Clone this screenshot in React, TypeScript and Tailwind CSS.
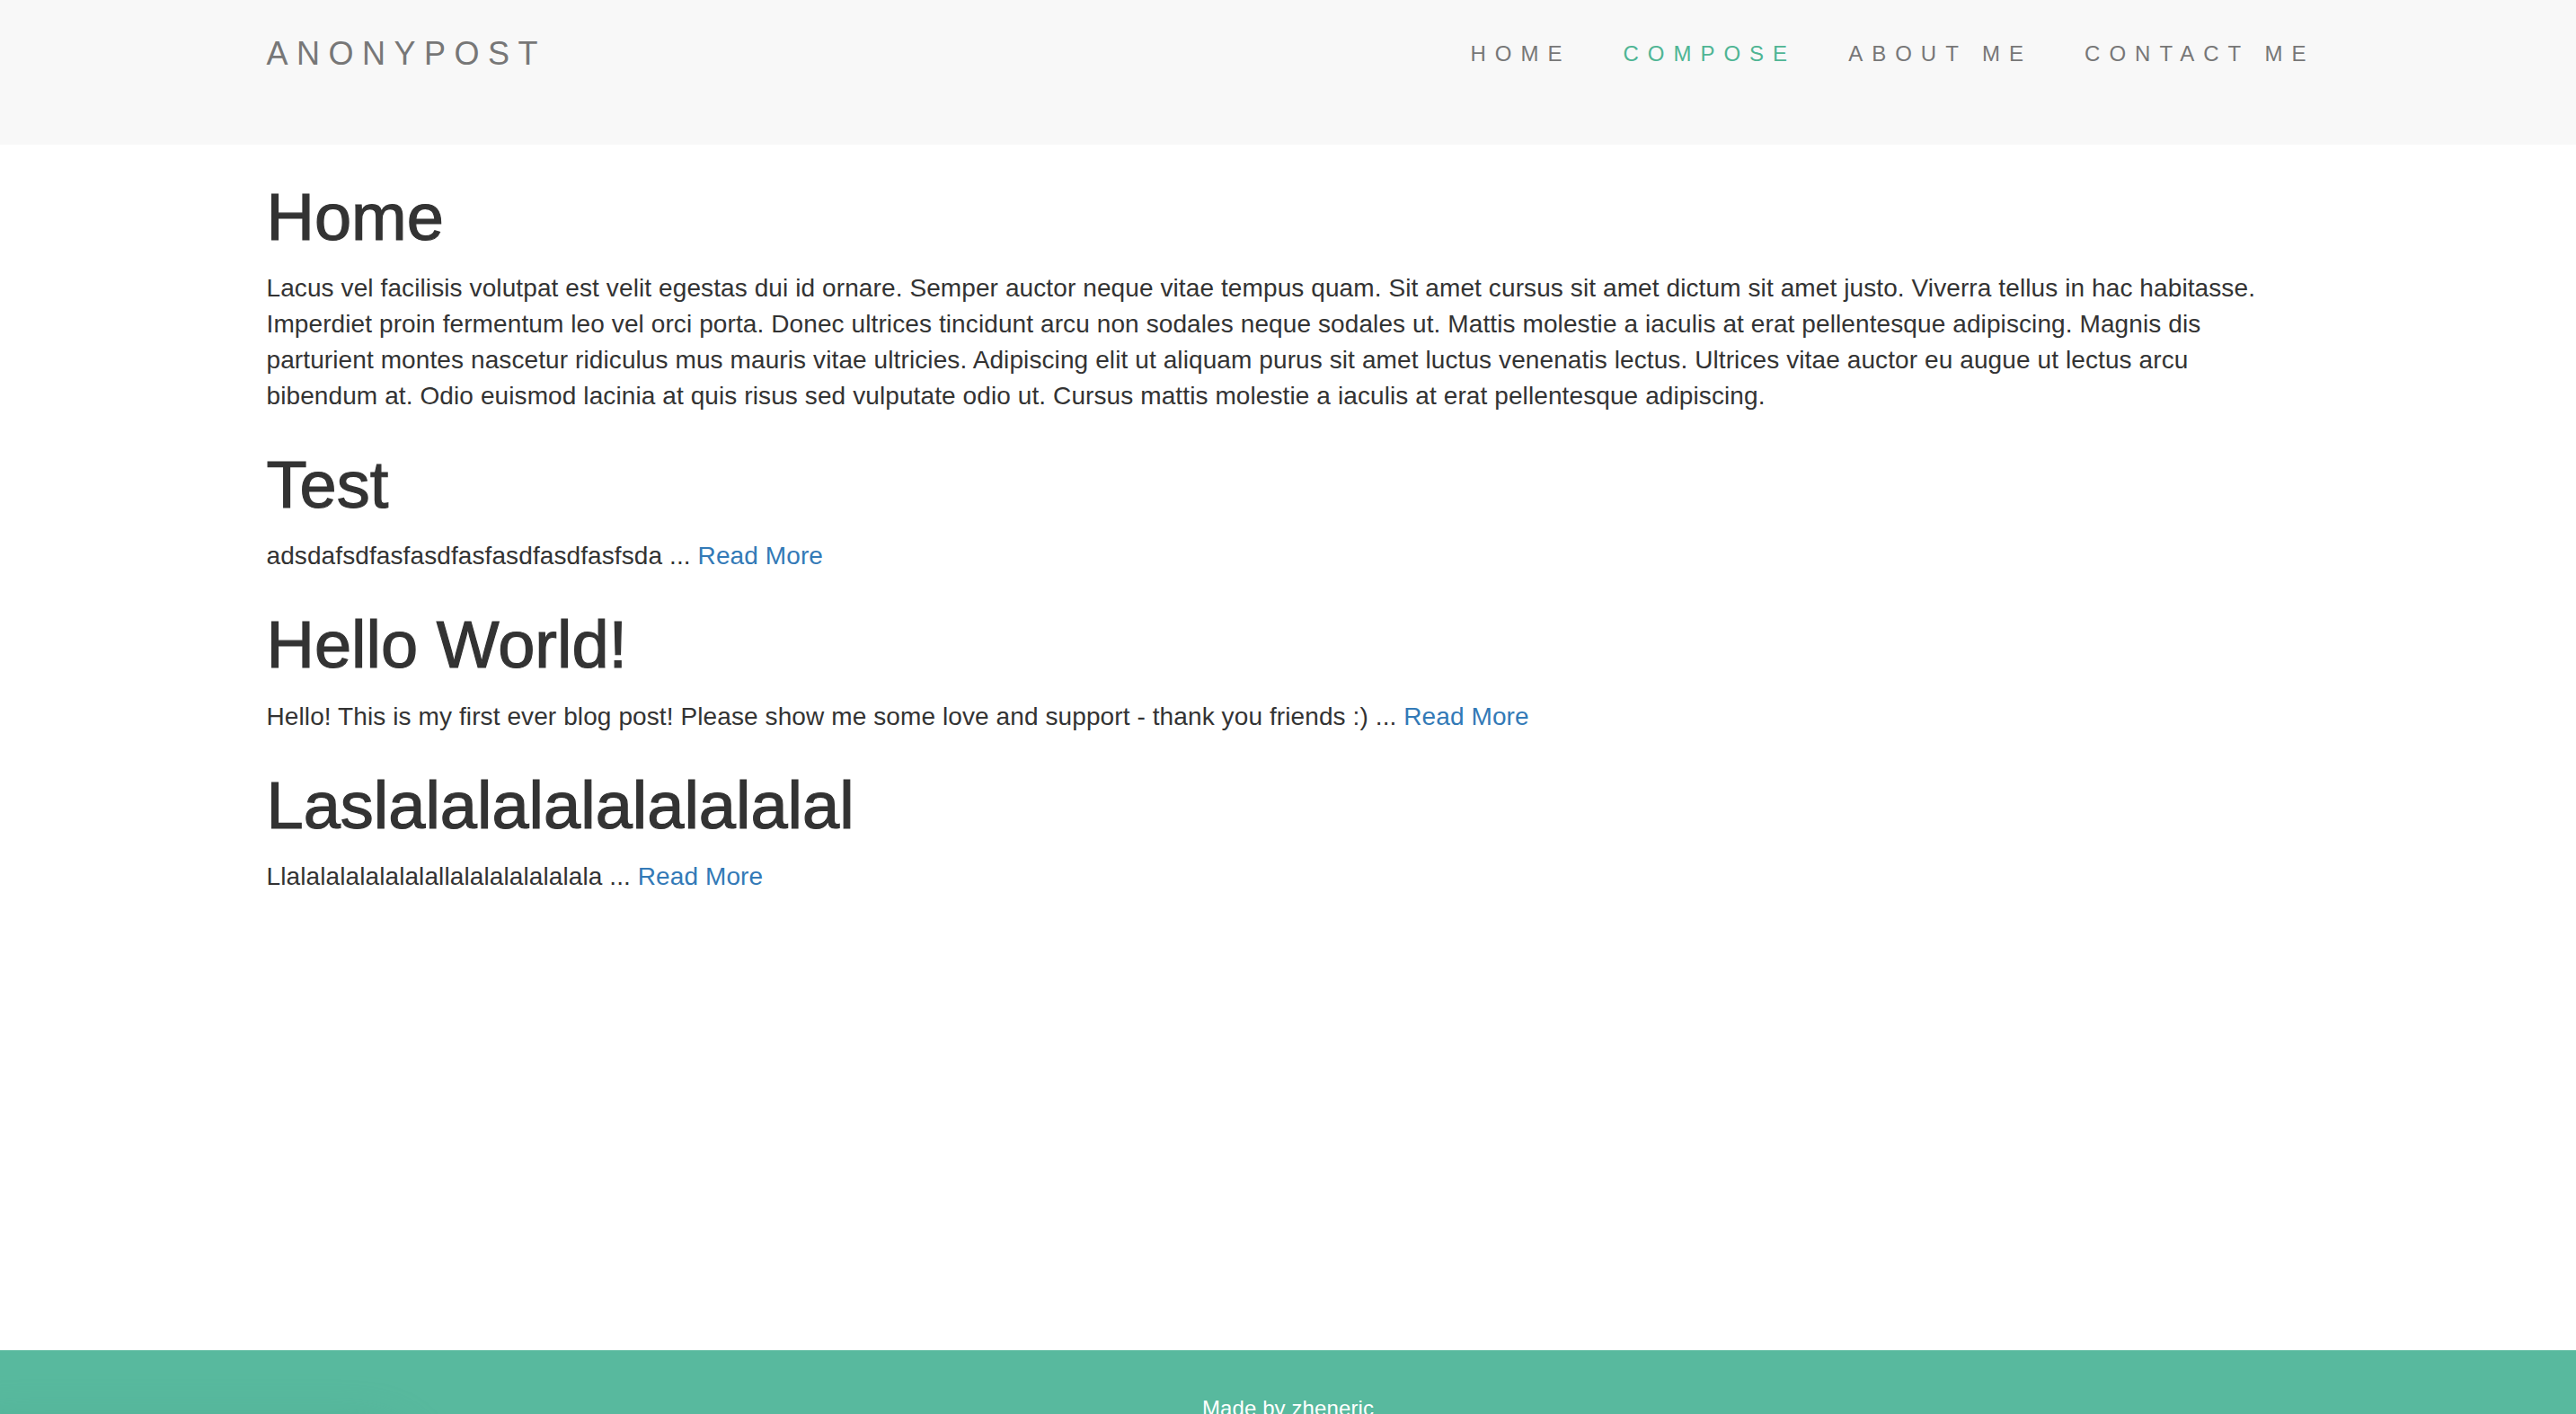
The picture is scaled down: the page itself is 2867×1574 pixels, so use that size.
const navLinks = [
  { label: 'Home', active: false },
  { label: 'Compose', active: true },
  { label: 'About Me', active: false },
  { label: 'Contact Me', active: false },
]

const posts = [
  {
    title: 'Test',
    excerpt: 'adsdafsdfasfasdfasfasdfasdfasfsda',
  },
  {
    title: 'Hello World!',
    excerpt:
      'Hello! This is my first ever blog post! Please show me some love and support - thank you friends :)',
  },
  {
    title: 'Laslalalalalalalalalal',
    excerpt: 'Llalalalalalalalallalalalalalalala',
  },
]

// lines split where the original page wraps them
const intro = [
  'Lacus vel facilisis volutpat est velit egestas dui id ornare. Semper auctor neque vitae tempus quam. Sit amet cursus sit amet dictum sit amet justo. Viverra tellus in hac habitasse.',
  'Imperdiet proin fermentum leo vel orci porta. Donec ultrices tincidunt arcu non sodales neque sodales ut. Mattis molestie a iaculis at erat pellentesque adipiscing. Magnis dis',
  'parturient montes nascetur ridiculus mus mauris vitae ultricies. Adipiscing elit ut aliquam purus sit amet luctus venenatis lectus. Ultrices vitae auctor eu augue ut lectus arcu',
  'bibendum at. Odio euismod lacinia at quis risus sed vulputate odio ut. Cursus mattis molestie a iaculis at erat pellentesque adipiscing.',
]

const App = () => {
  return (
    <div className="min-h-screen bg-white font-['Liberation_Sans',Arial,sans-serif] text-[28px] leading-[40px] tracking-[0.1px] text-[#333]">
      <header className="h-[161px] bg-[#f8f8f8]">
        <div className="mx-auto flex w-[2340px] items-start justify-between px-[33px] pt-[40px]">
          <a className="text-[36px] leading-[40px] tracking-[9.5px] text-[#777] uppercase">
            Anonypost
          </a>
          <ul className="-mr-[35px] flex">
            {navLinks.map((link) => (
              <li key={link.label}>
                <a
                  className={
                    link.active
                      ? 'block px-[29px] text-[24px] leading-[40px] tracking-[10px] text-[#4fb594] uppercase'
                      : 'block px-[29px] text-[24px] leading-[40px] tracking-[10px] text-[#777] uppercase'
                  }
                >
                  {link.label}
                </a>
              </li>
            ))}
          </ul>
        </div>
      </header>

      <main className="mx-auto min-h-[1342px] w-[2340px] px-[33px] pt-[1px]">
        <h1 className="mt-[40px] mb-[20px] text-[74px] leading-[79.2px] font-normal tracking-normal text-[#333] [-webkit-text-stroke:1.2px_#333]">
          Home
        </h1>
        <p className="mb-[20px]">
          {intro.map((line, i) => (
            <span key={i} className="block whitespace-nowrap">
              {line}
            </span>
          ))}
        </p>

        {posts.map((post) => (
          <div key={post.title}>
            <h1 className="mt-[39px] mb-[20px] text-[74px] leading-[79.2px] font-normal tracking-normal text-[#333] [-webkit-text-stroke:1.2px_#333]">
              {post.title}
            </h1>
            <p className="mb-[20px]">
              {post.excerpt} ... <a className="text-[#337ab7]">Read More</a>
            </p>
          </div>
        ))}
      </main>

      <footer className="relative h-[140px] overflow-hidden bg-[#58b99e] pt-[45px] text-center text-[24px] leading-[40px] text-white">
        <div className="pointer-events-none absolute -bottom-[50px] -left-[60px] h-[100px] w-[520px] rounded-full bg-[#3f9e83] opacity-40 blur-[30px]" />
        <p className="relative">Made by zheneric</p>
      </footer>
    </div>
  )
}

export default App
